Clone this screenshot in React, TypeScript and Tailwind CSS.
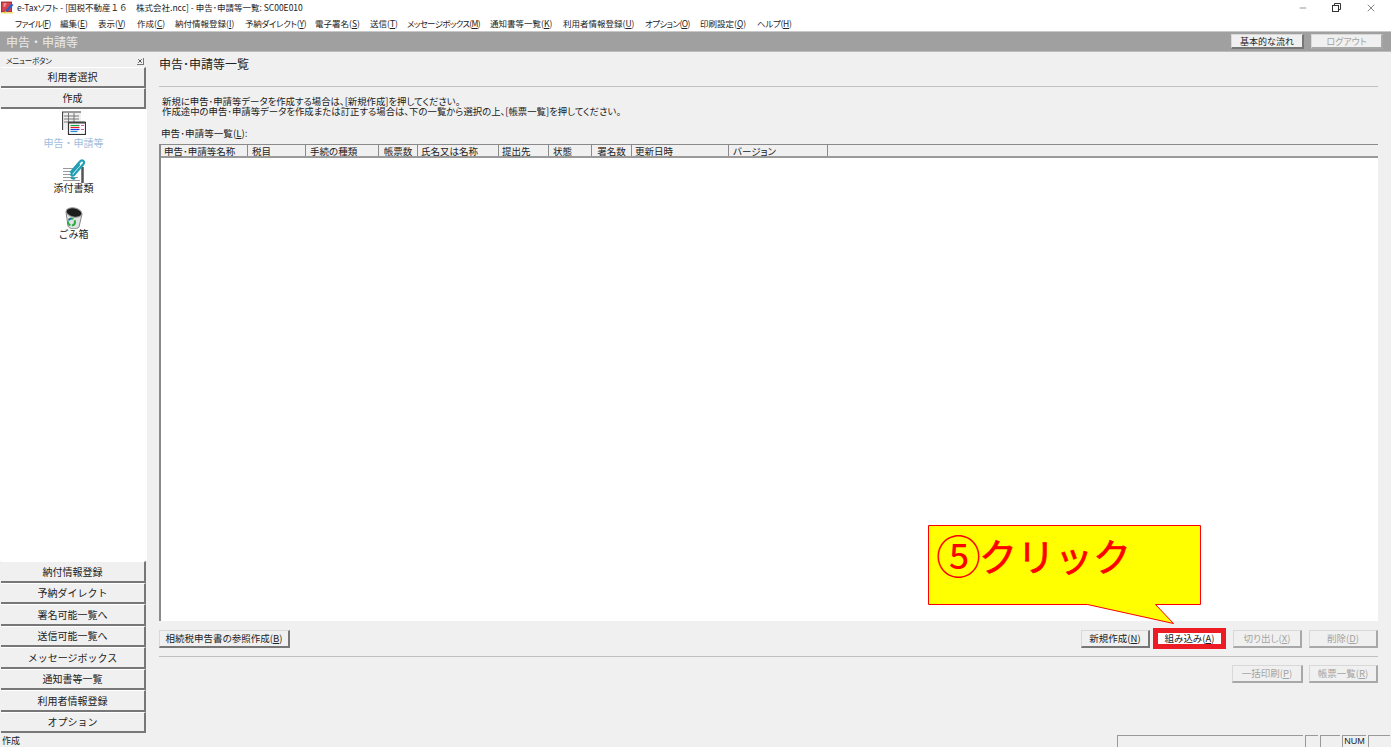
import { Minus, X } from "lucide-react";
import type { ReactNode } from "react";

const menus = [
  { label: "ファイル", k: "F", className: "w-[45px] tracking-[-0.6px]" },
  { label: "編集", k: "E", className: "w-[38px]" },
  { label: "表示", k: "V", className: "w-[39px]" },
  { label: "作成", k: "C", className: "w-[38px]" },
  { label: "納付情報登録", k: "I", className: "w-[70px]" },
  { label: "予納ダイレクト", k: "Y", className: "w-[70px] tracking-[-0.3px]" },
  { label: "電子署名", k: "S", className: "w-[55px]" },
  { label: "送信", k: "T", className: "w-[37px]" },
  { label: "メッセージボックス", k: "M", className: "w-[83px] tracking-[-0.7px]" },
  { label: "通知書等一覧", k: "K", className: "w-[73px]" },
  { label: "利用者情報登録", k: "U", className: "w-[82px]" },
  { label: "オプション", k: "O", className: "w-[55px] tracking-[-0.6px]" },
  { label: "印刷設定", k: "Q", className: "w-[57px]" },
  { label: "ヘルプ", k: "H", className: "w-[40px] tracking-[-0.3px]" },
];

const columns = [
  { label: "申告･申請等名称", className: "w-[87px] pl-[3px]" },
  { label: "税目", className: "w-[58px] pl-[4px]" },
  { label: "手続の種類", className: "w-[73px] pl-[4px]" },
  { label: "帳票数", className: "w-[39px] text-center" },
  { label: "氏名又は名称", className: "w-[81px] pl-[3px]" },
  { label: "提出先", className: "w-[50px] pl-[3px]" },
  { label: "状態", className: "w-[43px] pl-[4px]" },
  { label: "署名数", className: "w-[40px] text-center" },
  { label: "更新日時", className: "w-[97px] pl-[3px]" },
  { label: "バージョン", className: "w-[99px] pl-[4px]" },
];

const bottomMenu = ["納付情報登録", "予納ダイレクト", "署名可能一覧へ", "送信可能一覧へ", "メッセージボックス", "通知書等一覧", "利用者情報登録", "オプション"];

function AppLogo() {
  return (
    <svg viewBox="0 0 13 13" className="h-[13px] w-[13px] shrink-0">
      <rect x="0.5" y="1" width="10" height="10" fill="#d8404c" stroke="#8a2028" strokeWidth="0.8" />
      <path d="M2.500 3h3M2.500 5h2" stroke="#f8d8d8" strokeWidth="1" />
      <path d="M4 10 10.500 2.500 12.500 4 6 11z" fill="#2a5fc8" />
      <path d="M1 11h11v1.500H1z" fill="#f0e070" />
      <path d="M3 12.500 4 10l2 1z" fill="#e8c020" />
    </svg>
  );
}

function Accel({ label, k }: { label: string; k: string }) {
  return (
    <span className="whitespace-nowrap">
      {label}(<span className="underline">{k}</span>)
    </span>
  );
}

function WinButton({ children, className, disabled }: { children: ReactNode; className: string; disabled?: boolean }) {
  return (
    <div
      className={`flex items-center justify-center border border-[#d8d8d8] border-r-2 border-b-2 bg-[#f0f0f0] text-[9.5px] leading-none ${
        disabled ? "border-r-[#a8a8a8] border-b-[#a8a8a8] text-[#a3a3a3]" : "border-r-[#777] border-b-[#777] text-[#222]"
      } ${className}`}
    >
      {children}
    </div>
  );
}

function SideButton({ label, className }: { label: string; className: string }) {
  return (
    <div className={`ml-px flex w-[145px] shrink-0 items-center justify-center border-t border-t-white border-r-2 border-b-2 border-r-[#777] border-b-[#777] bg-[#f0f0f0] text-[10px] leading-none text-[#222] [font-feature-settings:normal] ${className}`}>
      {label}
    </div>
  );
}

function FormIcon() {
  return (
    <svg viewBox="0 0 24 24" className="h-[24px] w-[24px]">
      <rect x="0" y="0.500" width="19" height="18" fill="#f0f0f0" />
      <path d="M0.500 19V1H19" fill="none" stroke="#444" strokeWidth="1.200" />
      <path d="M2 5h15M2 8h15M2 11h4M6.500 2v9M12 2v9" stroke="#777" strokeWidth="1" />
      <rect x="6.500" y="11.500" width="17" height="12" fill="#fff" stroke="#333" strokeWidth="1.200" />
      <path d="M6.500 11.500h17" stroke="#444" strokeWidth="2" />
      <path d="M8.500 14.500h9" stroke="#18a048" strokeWidth="1.200" />
      <path d="M8.500 16.500h9" stroke="#e02020" strokeWidth="1.200" />
      <path d="M8.500 18.500h9" stroke="#2040e0" strokeWidth="1.200" />
      <path d="M8.500 20.500h7" stroke="#2090d0" strokeWidth="1.200" />
      <path d="M19 14.500h3M19 18.500h3" stroke="#f040e0" strokeWidth="1.200" />
    </svg>
  );
}

function ClipIcon() {
  return (
    <svg viewBox="0 0 24 25" className="h-[25px] w-[24px]">
      <path d="M1 10.500h11M1 13.500h9M1 16.500h9M1 19.500h15M1 22.500h17" stroke="#999" strokeWidth="1" />
      <path d="M20.500 9v16" stroke="#555" strokeWidth="2.500" />
      <path d="M9 14 18 3.500c2-2.500 5.500 0 3.500 2.500L12 17c-1.500 1.500-3.500 0-2.200-2L17 7" fill="none" stroke="#1f9fb4" strokeWidth="2.200" strokeLinecap="round" />
      <path d="M9 19c1 2 3 2 4 1" fill="none" stroke="#1f9fb4" strokeWidth="2" />
    </svg>
  );
}

function TrashIcon() {
  return (
    <svg viewBox="0 0 18 22" className="h-[22px] w-[18px]">
      <path d="M1 5 3 19c1 3.500 9 3.500 11 1l3-13z" fill="#dfe3df" stroke="#888" />
      <ellipse cx="9" cy="5.500" rx="8" ry="4.500" transform="rotate(12 9 5.500)" fill="#1c1c1c" stroke="#999" />
      <circle cx="6.500" cy="15" r="3.500" fill="none" stroke="#2fa84a" strokeWidth="2" strokeDasharray="5 1.500" />
      <path d="M3.500 13.500a3.500 3.500 0 0 1 3-2" fill="none" stroke="#2060c0" strokeWidth="1.500" />
    </svg>
  );
}

export default function App() {
  return (
    <div className="relative flex h-[747px] w-[1391px] flex-col overflow-hidden bg-[#f0f0f0] font-['Noto_Sans_CJK_JP','Noto_Sans',sans-serif] text-[#222] [font-feature-settings:'palt']">
      {/* window chrome */}
      <div className="flex h-[15px] items-center bg-white pl-px text-[8.5px] leading-none">
        <AppLogo />
        <span className="ml-[3px] whitespace-nowrap">
          e-Taxソフト - [国税不動産<span className="[font-feature-settings:normal]">１６　</span>株式会社.ncc] - 申告･申請等一覧: SC00E010
        </span>
        <div className="ml-auto flex items-center gap-[24px] pr-[14px] text-[#333]">
          <Minus size={10} strokeWidth={1.2} />
          <svg viewBox="0 0 9 9" className="h-[9px] w-[9px]" fill="none" stroke="currentColor" strokeWidth="1">
            <rect x="0.500" y="2.500" width="6" height="6" />
            <path d="M2.500 2.500v-2h6v6h-2" />
          </svg>
          <X size={12} strokeWidth={1.2} />
        </div>
      </div>
      <div className="flex h-[16px] items-center bg-white pl-[15px] text-[8.5px] leading-none">
        {menus.map((m) => (
          <div key={m.k} className={m.className}>
            <Accel label={m.label} k={m.k} />
          </div>
        ))}
      </div>

      <div className="flex h-[21px] items-center border-t border-b border-t-[#c8c8c8] border-b-[#bbb] bg-[#a0a0a0] pl-[6px] text-[12px] leading-none text-[#e8e8e8] [font-feature-settings:normal]">
        <span>申告・申請等</span>
        <div className="ml-auto flex gap-[7px] pr-[8px] [font-feature-settings:'palt']">
          <WinButton className="h-[15px] w-[73px]">
            <span className="text-[9px]">基本的な流れ</span>
          </WinButton>
          <WinButton className="h-[15px] w-[72px]" disabled>
            <span className="text-[9px]">ログアウト</span>
          </WinButton>
        </div>
      </div>

      <div className="flex min-h-0 flex-1">
        {/* left menu */}
        <div className="flex w-[147px] shrink-0 flex-col">
          <div className="flex h-[15px] shrink-0 items-center justify-between pl-[6px] pr-[3px] pt-[3px] text-[7.5px] leading-none">
            <span className="tracking-[-0.3px]">メニューボタン</span>
            <span className="flex h-[7px] w-[7px] items-center justify-center border-r border-b border-r-[#777] border-b-[#777]">
              <X size={6} strokeWidth={3} />
            </span>
          </div>
          <SideButton label="利用者選択" className="h-[21px]" />
          <SideButton label="作成" className="h-[21px]" />
          <div className="flex min-h-0 flex-1 flex-col items-center bg-white text-[10px] leading-none [font-feature-settings:normal]">
            <div className="mt-[2px]">
              <FormIcon />
            </div>
            <span className="mt-[3px] text-[#a3bede]">申告・申請等</span>
            <div className="mt-[10px]">
              <ClipIcon />
            </div>
            <span>添付書類</span>
            <div className="mt-[14px]">
              <TrashIcon />
            </div>
            <span>ごみ箱</span>
          </div>
          {bottomMenu.map((label) => (
            <SideButton key={label} label={label} className="h-[21.5px] pt-px" />
          ))}
        </div>

        {/* content */}
        <div className="flex min-w-0 flex-1 flex-col pl-[12px] pr-[13px]">
          <div className="flex h-[35px] shrink-0 items-start border-b border-b-[#c0c0c0] pt-[5px] text-[12px] leading-[14px]">申告･申請等一覧</div>
          <div className="mt-[9px] shrink-0 pl-[3px] text-[9.4px] leading-[10px]">
            <p>新規に申告･申請等データを作成する場合は、[新規作成]を押してください。</p>
            <p>作成途中の申告･申請等データを作成または訂正する場合は、下の一覧から選択の上、[帳票一覧]を押してください。</p>
          </div>
          <div className="mt-[11px] h-[12px] shrink-0 pl-[2px] text-[9.6px] leading-[12px]">
            申告･申請等一覧(<span className="underline">L</span>):
          </div>
          <div className="mt-[5px] flex min-h-0 flex-1 flex-col border-l-2 border-t border-l-[#8a8a8a] border-t-[#8a8a8a] bg-white">
            <div className="flex h-[13px] shrink-0 items-center border-b-2 border-b-[#9a9a9a] bg-[#f0f0f0] text-[9.5px] leading-none">
              {columns.map((col) => (
                <div key={col.label} className={`h-full shrink-0 border-r border-r-[#8a8a8a] leading-[12px] whitespace-nowrap ${col.className}`}>
                  {col.label}
                </div>
              ))}
            </div>
          </div>

          <div className="mt-[9px] flex h-[18px] shrink-0">
            <WinButton className="h-[18px] w-[131px]">
              <Accel label="相続税申告書の参照作成" k="B" />
            </WinButton>
            <WinButton className="ml-auto h-[18px] w-[69px]">
              <Accel label="新規作成" k="N" />
            </WinButton>
            <div className="ml-[3px] flex h-[21px] w-[73px] -translate-y-[2px] items-center justify-center border-[5px] border-[#ed1c24] bg-white text-[9.5px] leading-none">
              <Accel label="組み込み" k="A" />
            </div>
            <WinButton className="ml-[7px] h-[18px] w-[69px]" disabled>
              <Accel label="切り出し" k="X" />
            </WinButton>
            <WinButton className="ml-[7px] h-[18px] w-[69px]" disabled>
              <Accel label="削除" k="D" />
            </WinButton>
          </div>
          <div className="mt-[8px] h-px shrink-0 bg-[#c0c0c0]" />
          <div className="mt-[8px] mb-[50px] flex h-[18px] shrink-0 justify-end gap-[6px]">
            <WinButton className="h-[18px] w-[71px]" disabled>
              <Accel label="一括印刷" k="P" />
            </WinButton>
            <WinButton className="h-[18px] w-[69px]" disabled>
              <Accel label="帳票一覧" k="R" />
            </WinButton>
          </div>
        </div>
      </div>

      {/* status bar */}
      <div className="flex h-[14px] shrink-0 items-end pl-[2px] text-[9px] leading-none">
        <span className="mr-auto self-center">作成</span>
        <div className="h-[12px] w-[186px] border-t border-l border-t-[#999] border-l-[#999]" />
        <div className="ml-[2px] h-[12px] w-[13px] border-t border-l border-t-[#999] border-l-[#999]" />
        <div className="ml-[2px] h-[12px] w-[20px] border-t border-l border-t-[#999] border-l-[#999]" />
        <div className="ml-[2px] flex h-[12px] w-[24px] items-center justify-center border-t border-l border-t-[#999] border-l-[#999] font-['Liberation_Sans',sans-serif]">NUM</div>
        <div className="ml-[2px] mr-px h-[12px] w-[22px] border-t border-l border-t-[#999] border-l-[#999]" />
      </div>

      {/* annotation callout */}
      <div className="absolute left-[928px] top-[525px] h-[100px] w-[273px]">
        <svg viewBox="0 0 273 100" className="absolute inset-0 h-full w-full">
          <path d="M0.500 0.500H272.500V79.500H227.500L245.500 98.500L159.500 79.500H0.500Z" fill="#ffff00" stroke="#ff0000" />
        </svg>
        <div className="relative flex items-center pl-[9px] pt-[4px] leading-[52px] whitespace-nowrap text-[#ff0000] [font-feature-settings:normal]">
          <span className="-ml-px text-[45px]">⑤</span>
          <span className="-ml-[2px] text-[38px] [-webkit-text-stroke:0.7px_#ff0000]">クリック</span>
        </div>
      </div>
    </div>
  );
}
